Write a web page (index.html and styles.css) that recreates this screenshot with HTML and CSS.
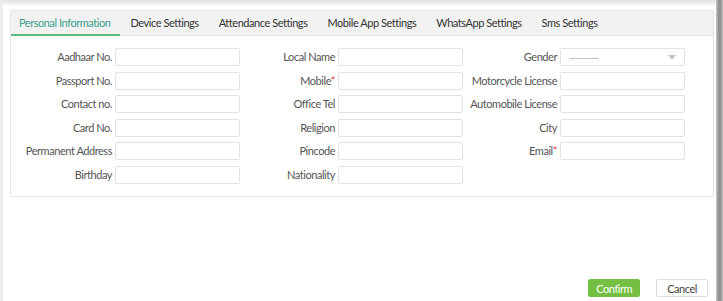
FILE: index.html
```html
<!DOCTYPE html>
<html lang="en">
<head>
  <meta charset="UTF-8" />
  <title>Employee - Personal Information</title>
  <link rel="stylesheet" href="styles.css">
</head>
<body>
  <div class="backdrop">
    <div class="edge-left"></div>
    <div class="dialog">
      <div class="tab-panel">
        <ul class="tab-bar">
          <li class="tab active">Personal Information</li>
          <li class="tab">Device Settings</li>
          <li class="tab">Attendance Settings</li>
          <li class="tab">Mobile App Settings</li>
          <li class="tab">WhatsApp Settings</li>
          <li class="tab">Sms Settings</li>
        </ul>

        <div class="tab-body">
          <form class="info-form">
            <label>Aadhaar No.</label><input type="text" />
            <label>Local Name</label><input type="text" />
            <label>Gender</label>
            <div class="select-box"><span>---------</span><i class="caret"></i></div>

            <label>Passport No.</label><input type="text" />
            <label>Mobile<em>*</em></label><input type="text" />
            <label>Motorcycle License</label><input type="text" />

            <label>Contact no.</label><input type="text" />
            <label>Office Tel</label><input type="text" />
            <label>Automobile License</label><input type="text" />

            <label>Card No.</label><input type="text" />
            <label>Religion</label><input type="text" />
            <label>City</label><input type="text" />

            <label>Permanent Address</label><input type="text" />
            <label>Pincode</label><input type="text" />
            <label>Email<em>*</em></label><input type="text" />

            <label>Birthday</label><input type="text" />
            <label>Nationality</label><input type="text" />
          </form>
        </div>
      </div>

      <div class="dialog-footer">
        <button class="btn btn-primary">Confirm</button>
        <button class="btn">Cancel</button>
      </div>
    </div>
    <div class="edge-right"></div>
  </div>
</body>
</html>
```

FILE: styles.css
```css
* {
  box-sizing: border-box;
  margin: 0;
  padding: 0;
}

body {
  font-family: 'Lato', 'Liberation Sans', sans-serif;
  font-size: 11px;
  letter-spacing: -0.45px;
  color: #555;
  background: #fff;
  height: 301px;
  overflow: hidden;
}

.backdrop {
  display: flex;
  height: 301px;
  background: linear-gradient(180deg, #e2e2e2 0px, #f6f6f6 5px, #fff 8px);
}

.edge-left {
  width: 3px;
  background: #ededed;
}

.edge-right {
  width: 7px;
  background: linear-gradient(90deg, #c8c8c8 0%, #8f8f8f 40%, #9c9c9c 80%, #d6d6d6 100%);
}

.dialog {
  flex: 1;
  margin-top: 5px;
  padding: 5px 7px 4px 7px;
  background: #fff;
  display: flex;
  flex-direction: column;
}

/* tabs */
.tab-panel {
  border: 1px solid #e6e6e6;
  margin-right: -5px;
}

.tab-bar {
  list-style: none;
  display: flex;
  height: 25px;
  background: #f2f2f2;
  border-bottom: 1px solid #e2e2e2;
}

.tab {
  padding: 0 10px;
  line-height: 24px;
  color: #333;
  white-space: nowrap;
}

.tab:first-child {
  padding-left: 8px;
}

.tab.active {
  color: #3b9f8c;
  border-bottom: 2px solid #5cb87a;
  height: 25px;
}

.tab-body {
  padding: 12px 0 12px 0;
}

/* form grid */
.info-form {
  display: grid;
  grid-template-columns: 101px 125px 92px 125px 91px 125px;
  grid-auto-rows: 18px;
  column-gap: 3px;
  row-gap: 5.6px;
}

.info-form label {
  text-align: right;
  line-height: 18px;
  color: #555;
  white-space: nowrap;
}

.info-form label em {
  font-style: normal;
  color: #e33b3b;
}

.info-form input,
.select-box {
  height: 18px;
  border: 1px solid #e3e3e3;
  border-radius: 2px;
  background: #fff;
  font: inherit;
  outline: none;
}

.select-box {
  display: flex;
  align-items: center;
  justify-content: space-between;
  padding: 0 8px 0 8px;
  color: #999;
  font-size: 10px;
}

.caret {
  width: 0;
  height: 0;
  border-left: 4px solid transparent;
  border-right: 4px solid transparent;
  border-top: 5px solid #c4c4c4;
}

/* footer */
.dialog-footer {
  margin-top: auto;
  display: flex;
  justify-content: flex-end;
  gap: 16px;
  padding-right: 1px;
}

.btn {
  height: 18px;
  padding: 0 10px;
  font: inherit;
  letter-spacing: -0.45px;
  color: #444;
  background: #fff;
  border: 1px solid #dcdcdc;
  border-radius: 2px;
}

.btn-primary {
  padding: 0 7px;
  background: #75bf42;
  border-color: #75bf42;
  color: #fff;
}
```
